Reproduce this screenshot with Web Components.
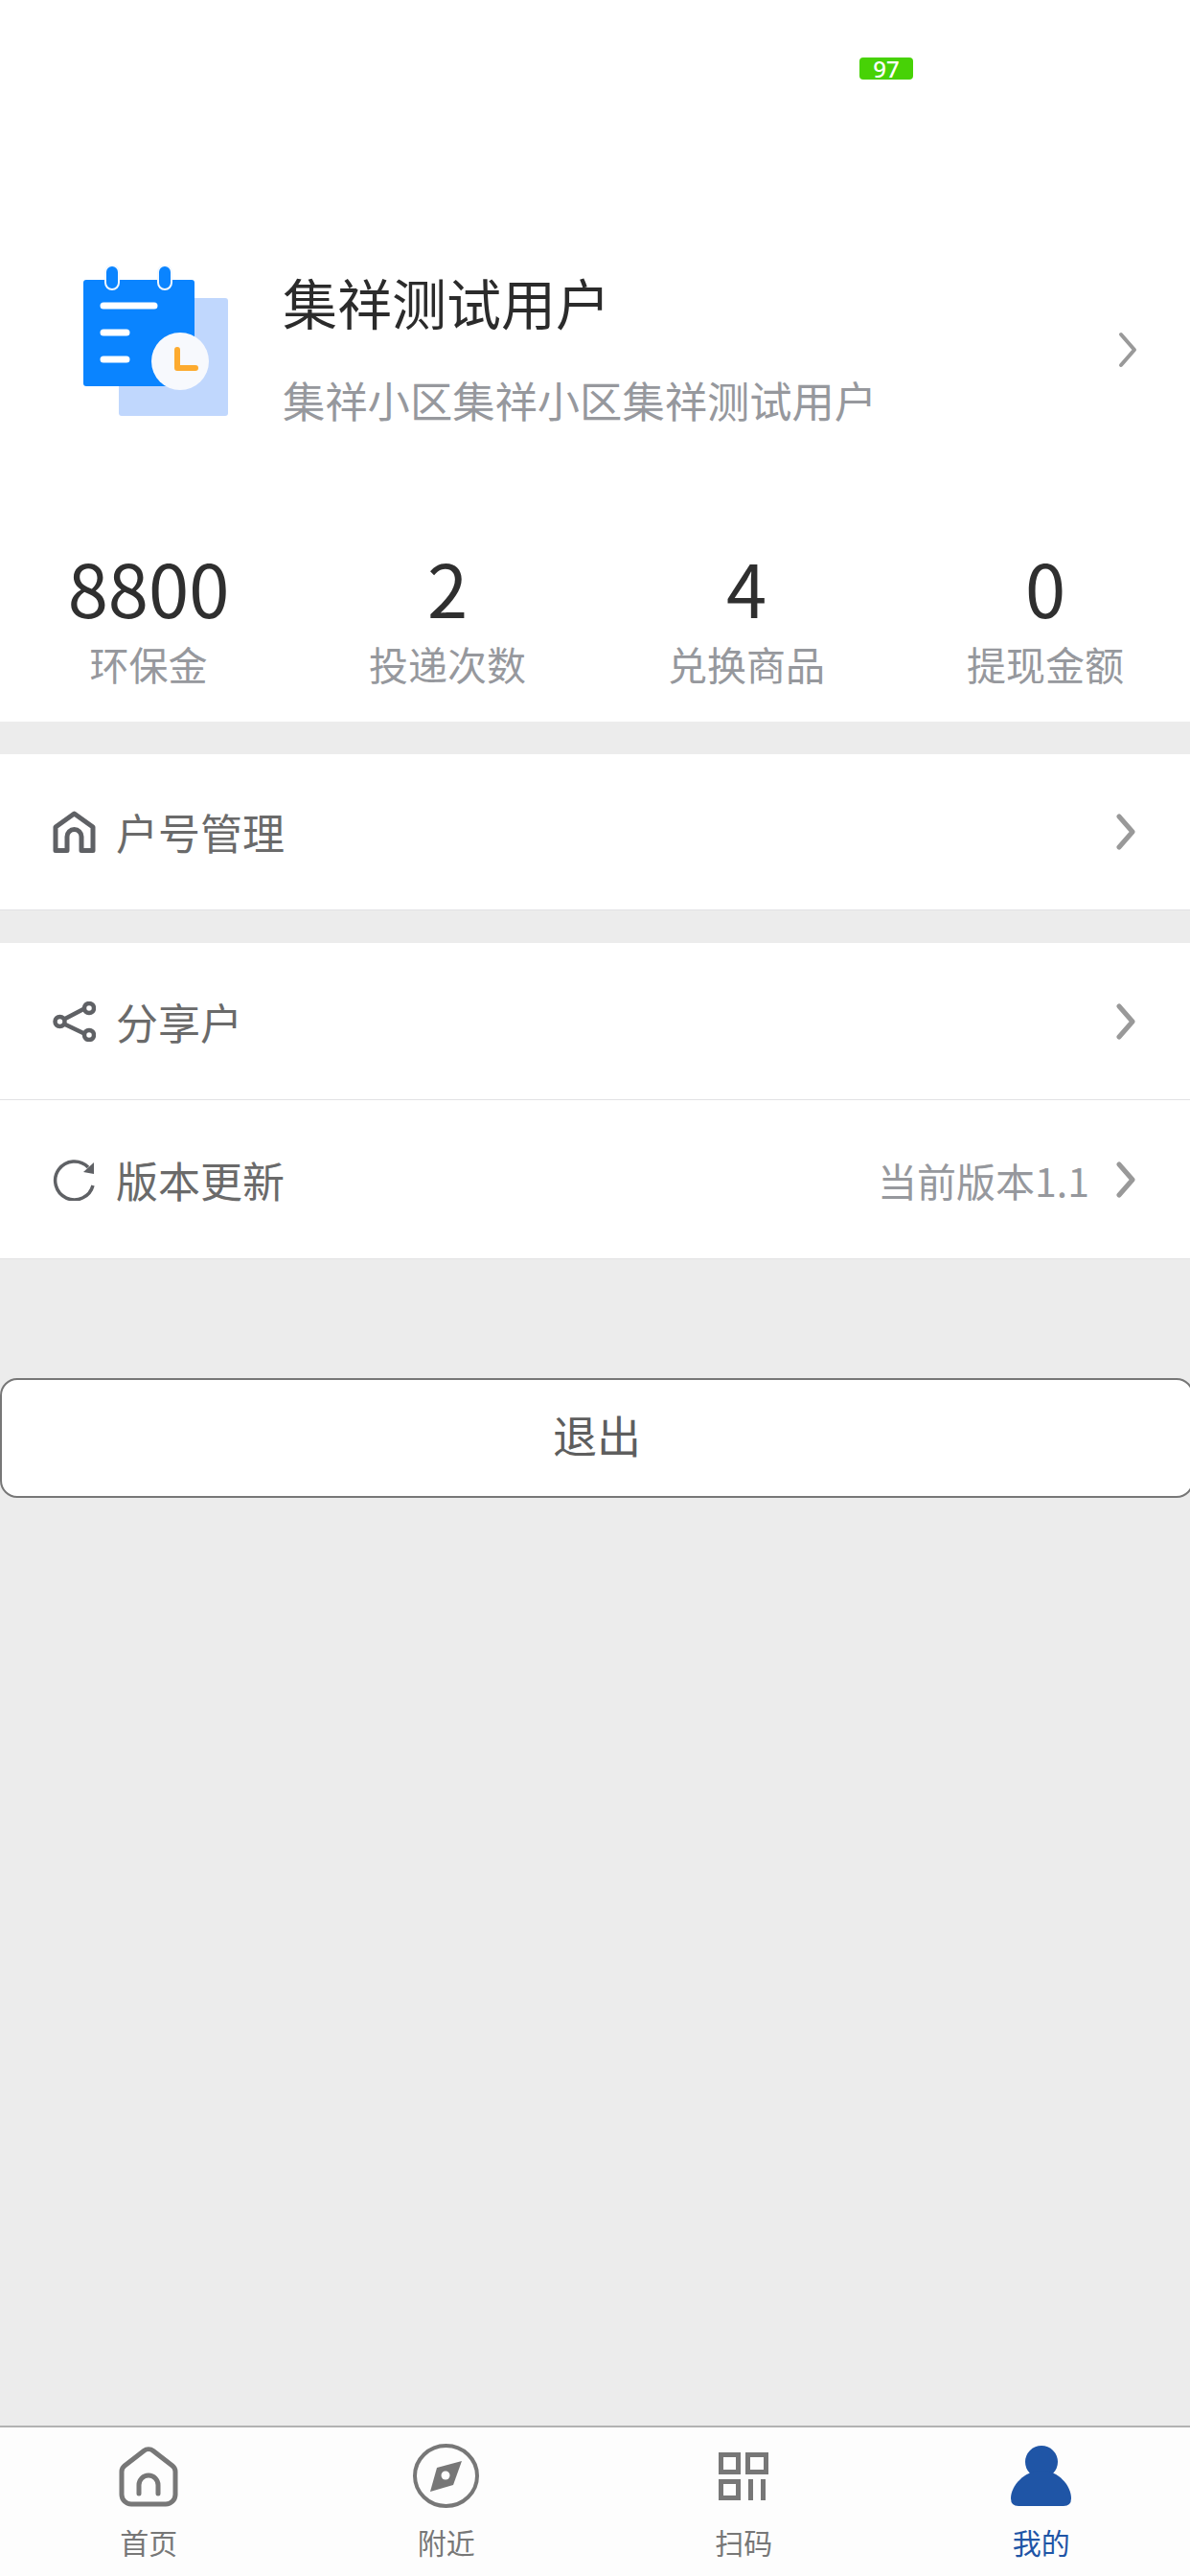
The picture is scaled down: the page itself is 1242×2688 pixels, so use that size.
<!DOCTYPE html>
<html lang="zh">
<head>
<meta charset="utf-8">
<title>我的</title>
<style>
  html, body { margin: 0; padding: 0; }
  body {
    width: 1242px; height: 2688px; overflow: hidden;
    font-family: "Noto Sans CJK SC", "Noto Sans", sans-serif;
  }
</style>
</head>
<body>
<me-page>
  <me-status slot="top" level="97"></me-status>
  <me-profile slot="top" name="集祥测试用户" addr="集祥小区集祥小区集祥测试用户"></me-profile>
  <me-stats slot="top">
    <me-stat value="8800" label="环保金"></me-stat>
    <me-stat value="2" label="投递次数"></me-stat>
    <me-stat value="4" label="兑换商品"></me-stat>
    <me-stat value="0" label="提现金额"></me-stat>
  </me-stats>

  <me-group>
    <me-row label="户号管理" height="162">
      <svg slot="icon" width="45" height="44" viewBox="0 0 45 44" fill="none" stroke="#5f6165" stroke-width="5" stroke-linejoin="round"><path d="M3 41.5V17L22.5 3 42 17V41.5H30V27a7.5 7.5 0 0 0-15 0V41.5Z"/></svg>
    </me-row>
  </me-group>
  <me-group>
    <me-row label="分享户" height="163">
      <svg slot="icon" width="45" height="42" viewBox="0 0 45 42" fill="none" stroke="#5f6165" stroke-width="4.5"><path d="M12 18.500 34 7M12 23.500 34 34"/><circle cx="7.500" cy="21" r="5"/><circle cx="38" cy="7" r="5"/><circle cx="38" cy="35" r="5"/></svg>
    </me-row>
    <me-row label="版本更新" height="165" extra="当前版本1.1">
      <svg slot="icon" width="45" height="44" viewBox="0 0 45 44" fill="none" stroke="#5f6165" stroke-width="3.500"><path d="M42 28A20 20 0 1 1 37 9"/><path d="M43 4V16L32 14Z" fill="#5f6165" stroke="none"/></svg>
    </me-row>
  </me-group>

  <me-button>退出</me-button>

  <me-tabbar slot="bottom">
    <me-tab label="首页">
      <svg slot="icon" width="62" height="65" viewBox="0 0 62 65" fill="none" stroke="#777" stroke-width="5" stroke-linejoin="round" stroke-linecap="round"><path d="M26 6.500a8 8 0 0 1 10 0L56 22a8 8 0 0 1 3 6V52a10 10 0 0 1-10 10H13A10 10 0 0 1 3 52V28a8 8 0 0 1 3-6Z"/><path d="M21 51V42a10 10 0 0 1 20 0V51"/></svg>
    </me-tab>
    <me-tab label="附近">
      <svg slot="icon" width="69" height="67" viewBox="0 0 69 67"><ellipse cx="34.500" cy="33.500" rx="32.500" ry="31.500" fill="none" stroke="#777" stroke-width="4"/><path d="M51 18 42 43 18 50 25 25Z" fill="#777"/><circle cx="34" cy="33" r="4.500" fill="#fff"/></svg>
    </me-tab>
    <me-tab label="扫码">
      <svg slot="icon" width="52" height="50" viewBox="0 0 52 50" fill="none" stroke="#777" stroke-width="5"><rect x="2.500" y="2.500" width="18" height="18"/><rect x="30.500" y="2.500" width="19" height="18"/><rect x="2.500" y="30.500" width="18" height="17"/><path d="M33.500 28V50M46.500 28V50"/></svg>
    </me-tab>
    <me-tab label="我的" active>
      <svg slot="icon" width="63" height="63" viewBox="0 0 63 63" fill="#1f55a6"><circle cx="32" cy="17" r="17"/><path d="M32 26C50 26 63 42 63 55Q63 63 55 63H8Q0 63 0 55C0 42 14 26 32 26Z"/></svg>
    </me-tab>
  </me-tabbar>
</me-page>

<script>
'use strict';

// base común: cada elemento pone su estilo y su marcado en el shadow root
class MeBase extends HTMLElement {
    constructor() {
        super();
        this.attachShadow({ mode: 'open' });
    }
    connectedCallback() {
        this.shadowRoot.innerHTML = `<style>${this.css()}</style>${this.html()}`;
    }
    css() { return ':host { display: block; }'; }
    html() { return '<slot></slot>'; }
    attr(name) { return this.getAttribute(name) || ''; }
}

const CHEVRON = (h, sw) => `
  <svg width="20" height="${h}" viewBox="0 0 20 ${h}" fill="none" stroke="#999" stroke-width="${sw}"
       stroke-linecap="round" stroke-linejoin="round" style="display:block">
    <path d="M3 3 17 ${h / 2} 3 ${h - 3}"/>
  </svg>`;

class MePage extends MeBase {
    css() { return `
      :host { display: flex; flex-direction: column; width: 1242px; height: 2688px; background: #ececec;
              overflow: hidden; font-family: "Noto Sans CJK SC", "Noto Sans", sans-serif; }
      .top { background: #fff; height: 753px; overflow: hidden; }
      .main { flex: 1; display: flex; flex-direction: column; }
    `; }
    html() { return `
      <div class="top"><slot name="top"></slot></div>
      <div class="main"><slot></slot></div>
      <slot name="bottom"></slot>
    `; }
}

class MeStatus extends MeBase {
    css() { return `
      :host { display: block; height: 277px; padding: 60px 0 0 897px; box-sizing: border-box; }
      .badge { width: 56px; height: 23px; border-radius: 4px; background: #47d206; color: #fff;
               font: 500 24px/23px "Noto Sans", sans-serif; text-align: center; }
    `; }
    html() { return `<div class="badge">${this.attr('level')}</div>`; }
}

class MeProfile extends MeBase {
    css() { return `
      :host { display: flex; height: 183px; padding: 0 55px 0 87px; box-sizing: border-box; }
      svg.logo { display: block; flex: none; }
      .txt { flex: 1; margin-left: 57px; margin-top: -3px; }
      .name { font-size: 57px; line-height: 80px; color: #2b2b2b; }
      .addr { font-size: 44.3px; line-height: 80px; margin-top: 23px; color: #96989d; white-space: nowrap; }
      .go { margin-top: 69px; }
    `; }
    html() { return `
      <svg class="logo" width="151" height="157" viewBox="0 0 151 157">
        <rect x="37" y="34" width="114" height="123" rx="3" fill="#c0d7fd"/>
        <rect x="0" y="15" width="116" height="111" rx="3" fill="#0a84ff"/>
        <rect x="23" y="0" width="14" height="25" rx="7" fill="#0a84ff" stroke="#f2f8ff" stroke-width="2"/>
        <rect x="78" y="0" width="14" height="25" rx="7" fill="#0a84ff" stroke="#f2f8ff" stroke-width="2"/>
        <path d="M21 42H74M21 70H45M21 98H45" stroke="#fff" stroke-width="7" stroke-linecap="round"/>
        <circle cx="101" cy="100" r="30" fill="#f7f9fd"/>
        <path d="M98 88V107H117" fill="none" stroke="#fdab2f" stroke-width="6" stroke-linecap="round" stroke-linejoin="round"/>
      </svg>
      <div class="txt">
        <div class="name">${this.attr('name')}</div>
        <div class="addr">${this.attr('addr')}</div>
      </div>
      <div class="go">${CHEVRON(38, 4)}</div>
    `; }
}

class MeStats extends MeBase {
    css() { return `
      :host { display: grid; grid-template-columns: repeat(4, 312px); margin-left: -1px; padding-top: 112px; }
    `; }
}

class MeStat extends MeBase {
    css() { return `
      :host { display: block; text-align: center; }
      .v { font-size: 76px; line-height: 80px; color: #2f2f2f; }
      .l { font-size: 41px; line-height: 60px; margin-top: 10px; color: #96989d; }
    `; }
    html() { return `<div class="v">${this.attr('value')}</div><div class="l">${this.attr('label')}</div>`; }
}

class MeGroup extends MeBase {
    css() { return `
      :host { display: block; margin-top: 34px; background: #fff; }
      ::slotted(me-row:not(:first-child)) { border-top: 1px solid #e2e2e4; }
    `; }
}

class MeRow extends MeBase {
    css() { return `
      :host { display: block; border-bottom: 1px solid #e2e2e4; }
      :host(:not(:last-child)) { border-bottom: 0; }
      .row { display: flex; align-items: center; height: ${this.attr('height') || 163}px; padding: 0 57px 0 55px; }
      .ic { width: 45px; display: flex; justify-content: center; margin-right: 21px; }
      .t { flex: 1; font-size: 44px; color: #6a6a6a; line-height: 60px; }
      .x { font-size: 41px; color: #96989d; line-height: 60px; margin-right: 28px; }
    `; }
    html() {
        const extra = this.attr('extra');
        return `
      <div class="row">
        <div class="ic"><slot name="icon"></slot></div>
        <div class="t">${this.attr('label')}</div>
        ${extra ? `<div class="x">${extra}</div>` : ''}
        ${CHEVRON(38, 5)}
      </div>`;
    }
}

class MeButton extends MeBase {
    css() { return `
      :host { display: block; margin-top: 124px; width: 1246px; }
      button { display: block; width: 100%; height: 125px; box-sizing: border-box; padding: 0 0 10px;
               background: #fff; border: 2px solid #777; border-radius: 18px; color: #5e5e5e;
               font: 46px/1 "Noto Sans CJK SC", sans-serif; }
    `; }
    html() { return '<button type="button"><slot></slot></button>'; }
}

class MeTabbar extends MeBase {
    css() { return `
      :host { display: grid; grid-template-columns: repeat(4, 1fr); height: 155px; box-sizing: content-box;
              border-top: 2px solid #b2b2b2; background: #fdfdfd; }
    `; }
}

class MeTab extends MeBase {
    css() { return `
      :host { display: flex; flex-direction: column; align-items: center; padding-top: 17px;
              color: #777; }
      :host([active]) { color: #1f55a6; }
      .ic { height: 67px; display: flex; align-items: center; }
      .l { font-size: 30px; line-height: 40px; margin-top: 15px; }
    `; }
    html() { return `<div class="ic"><slot name="icon"></slot></div><div class="l">${this.attr('label')}</div>`; }
}

customElements.define('me-page', MePage);
customElements.define('me-status', MeStatus);
customElements.define('me-profile', MeProfile);
customElements.define('me-stats', MeStats);
customElements.define('me-stat', MeStat);
customElements.define('me-group', MeGroup);
customElements.define('me-row', MeRow);
customElements.define('me-button', MeButton);
customElements.define('me-tabbar', MeTabbar);
customElements.define('me-tab', MeTab);
</script>
</body>
</html>
